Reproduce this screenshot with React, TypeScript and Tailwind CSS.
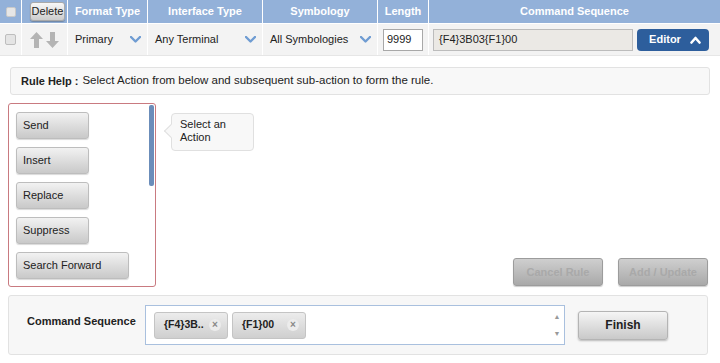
import { ReactNode } from 'react';

const font = { fontFamily: '"Liberation Sans", Arial, sans-serif' };

function ChevronDown() {
  return (
    <svg width="11" height="7" viewBox="0 0 11 7">
      <path d="M1 1 L5.5 5.5 L10 1" fill="none" stroke="#6f9cd2" strokeWidth="2.4" strokeLinecap="round" strokeLinejoin="round" />
    </svg>
  );
}

function Arrow({ down }: { down?: boolean }) {
  return (
    <svg width="13" height="16" viewBox="0 0 13 16" style={down ? { transform: 'rotate(180deg)' } : undefined}>
      <polygon points="6.5,0 13,7 9,7 9,16 4,16 4,7 0,7" fill="#b4b4b4" />
    </svg>
  );
}

function HeadCell({ children }: { children?: ReactNode }) {
  return (
    <div className="flex items-center justify-center bg-[#93b1d9] text-[11px] font-bold text-white">{children}</div>
  );
}

function SelectCell({ label }: { label: string }) {
  return (
    <div className="flex items-center justify-between bg-[#f3f3f3] pl-[7px] pr-[6px] text-[11px] text-[#222]">
      <span>{label}</span>
      <ChevronDown />
    </div>
  );
}

function ActionButton({ label, wide }: { label: string; wide?: boolean }) {
  return (
    <div
      className={`flex h-[27px] shrink-0 items-center rounded-[3px] border border-[#bdbdbd] bg-gradient-to-b from-[#f2f2f2] to-[#c9c9c9] pl-[6px] text-[11px] text-[#222] shadow-[0_1px_1px_rgba(0,0,0,0.15)] ${
        wide ? 'w-[113px]' : 'w-[73px]'
      }`}
    >
      {label}
    </div>
  );
}

function Tag({ label }: { label: string }) {
  return (
    <div className="flex h-[27px] w-[74px] items-center justify-between rounded-[3px] border border-[#c4c4c4] bg-gradient-to-b from-[#ececec] to-[#cfcfcf] pl-[9px] pr-[6px] text-[10.5px] font-bold text-[#222]">
      <span>{label}</span>
      <span className="flex h-[12px] w-[12px] items-center justify-center rounded-full bg-[#ececec] text-[10px] font-bold leading-none text-[#888]">×</span>
    </div>
  );
}

export default function App() {
  return (
    <div className="h-[363px] w-[720px] overflow-hidden bg-white" style={font}>
      {/* Table header + row */}
      <div className="grid grid-cols-[21px_45px_79px_114px_114px_50px_1fr] grid-rows-[23px_31px] gap-px bg-white">
        <HeadCell>
          <span className="h-[10px] w-[10px] rounded-[2px] border border-[#c9c9c9] bg-[#e6e6e6]" />
        </HeadCell>
        <div className="flex items-center justify-end bg-[#93b1d9] pr-[2px]">
          <button className="h-[19px] w-[35px] rounded-[3px] border border-[#a9a9a9] bg-gradient-to-b from-[#f7f7f7] to-[#cdcdcd] text-[11px] leading-none text-[#222] shadow-[0_1px_1px_rgba(0,0,0,0.25)]">
            Delete
          </button>
        </div>
        <HeadCell>Format Type</HeadCell>
        <HeadCell>Interface Type</HeadCell>
        <HeadCell>Symbology</HeadCell>
        <HeadCell>Length</HeadCell>
        <HeadCell>Command Sequence</HeadCell>

        <div className="flex items-center justify-center bg-[#f3f3f3]">
          <span className="h-[11px] w-[11px] rounded-[2px] border border-[#bdbdbd] bg-[#e4e4e4]" />
        </div>
        <div className="flex items-center justify-center gap-[3px] bg-[#f3f3f3]">
          <Arrow />
          <Arrow down />
        </div>
        <SelectCell label="Primary" />
        <SelectCell label="Any Terminal" />
        <SelectCell label="All Symbologies" />
        <div className="flex items-center bg-[#f3f3f3] pl-[5px]">
          <div className="flex h-[22px] w-[40px] items-center border border-[#a8a8a8] bg-white pl-[3px] text-[11px] text-[#222]">9999</div>
        </div>
        <div className="flex items-center gap-[4px] bg-[#f3f3f3] pl-[4px]">
          <div className="flex h-[22px] w-[200px] items-center border border-[#bcbcbc] bg-[#ebe9e5] pl-[5px] text-[11px] text-[#222]">
            {'{F4}3B03{F1}00'}
          </div>
          <button className="flex h-[22px] w-[72px] items-center justify-center gap-[9px] rounded-[4px] bg-[#2d5e9c] pl-[4px] text-[11px] font-bold text-white">
            Editor
            <svg width="11" height="8" viewBox="0 0 11 8">
              <path d="M1.5 6.5 L5.5 2 L9.5 6.5" fill="none" stroke="white" strokeWidth="2.6" strokeLinecap="round" strokeLinejoin="round" />
            </svg>
          </button>
        </div>
      </div>
      <div className="h-px bg-[#e6e6e6]" />

      {/* Rule help */}
      <div className="mx-[10px] mt-[11px] flex h-[28px] items-center rounded-[3px] border border-[#e2e2e2] bg-[#f8f8f8] pl-[10px] text-[#222]">
        <span className="text-[11px] font-bold">Rule Help :</span>
        <span className="ml-[4px] text-[11.5px]">Select Action from below and subsequent sub-action to form the rule.</span>
      </div>

      {/* Action area */}
      <div className="mt-[8px] flex h-[184px] pl-[8px] pr-[12px]">
        <div className="relative flex h-full w-[148px] flex-col gap-[8px] overflow-hidden rounded-[3px] border border-[#c97a80] pl-[7px] pt-[8px]">
          <ActionButton label="Send" />
          <ActionButton label="Insert" />
          <ActionButton label="Replace" />
          <ActionButton label="Suppress" />
          <ActionButton label="Search Forward" wide />
          <div className="absolute right-[1px] top-[1px] h-[81px] w-[5px] rounded-[2px] bg-[#6b8dba]" />
        </div>

        <div className="relative ml-[15px] mt-[10px] h-[38px] w-[83px] rounded-[4px] border border-[#e0e0e0] bg-[#f8f8f8] pl-[8px] pt-[4px] text-[11px] leading-[13px] text-[#222]">
          <span className="absolute left-[-6px] top-[12px] h-[10px] w-[10px] rotate-45 border-b border-l border-[#e0e0e0] bg-[#f8f8f8]" />
          <span className="relative">
            Select an
            <br />
            Action
          </span>
        </div>

        <div className="flex flex-1 items-end justify-end gap-[15px] pb-px">
          <button className="h-[28px] w-[90px] rounded-[3px] border border-[#9c9c9c] bg-gradient-to-b from-[#cfcfcf] to-[#a9a9a9] text-[11px] font-bold text-[#a9a9a9] shadow-[0_1px_1px_rgba(0,0,0,0.2)]">
            Cancel Rule
          </button>
          <button className="h-[28px] w-[90px] rounded-[3px] border border-[#9c9c9c] bg-gradient-to-b from-[#cfcfcf] to-[#a9a9a9] text-[11px] font-bold text-[#a9a9a9] shadow-[0_1px_1px_rgba(0,0,0,0.2)]">
            Add / Update
          </button>
        </div>
      </div>

      {/* Command sequence panel */}
      <div className="ml-[8px] mt-[8px] flex h-[60px] w-[700px] items-center rounded-[3px] border border-[#e2e2e2] bg-[#f7f7f7]">
        <div className="w-[136px] self-start pl-[18px] pt-[17px] text-[11px] font-bold text-[#222]">Command Sequence</div>
        <div className="flex h-[40px] w-[420px] items-center gap-[4px] border border-[#a9c0de] bg-white pl-[8px]">
          <Tag label="{F4}3B.." />
          <Tag label="{F1}00" />
          <div className="ml-auto flex h-full w-[14px] flex-col items-center justify-between py-[7px] text-[7px] leading-none text-[#999]">
            <span>▲</span>
            <span>▼</span>
          </div>
        </div>
        <button className="ml-[13px] h-[29px] w-[90px] rounded-[3px] border border-[#b4b4b4] bg-gradient-to-b from-[#f5f5f5] to-[#c9c9c9] text-[12px] font-bold text-[#222] shadow-[0_1px_2px_rgba(0,0,0,0.25)]">
          Finish
        </button>
      </div>
    </div>
  );
}
